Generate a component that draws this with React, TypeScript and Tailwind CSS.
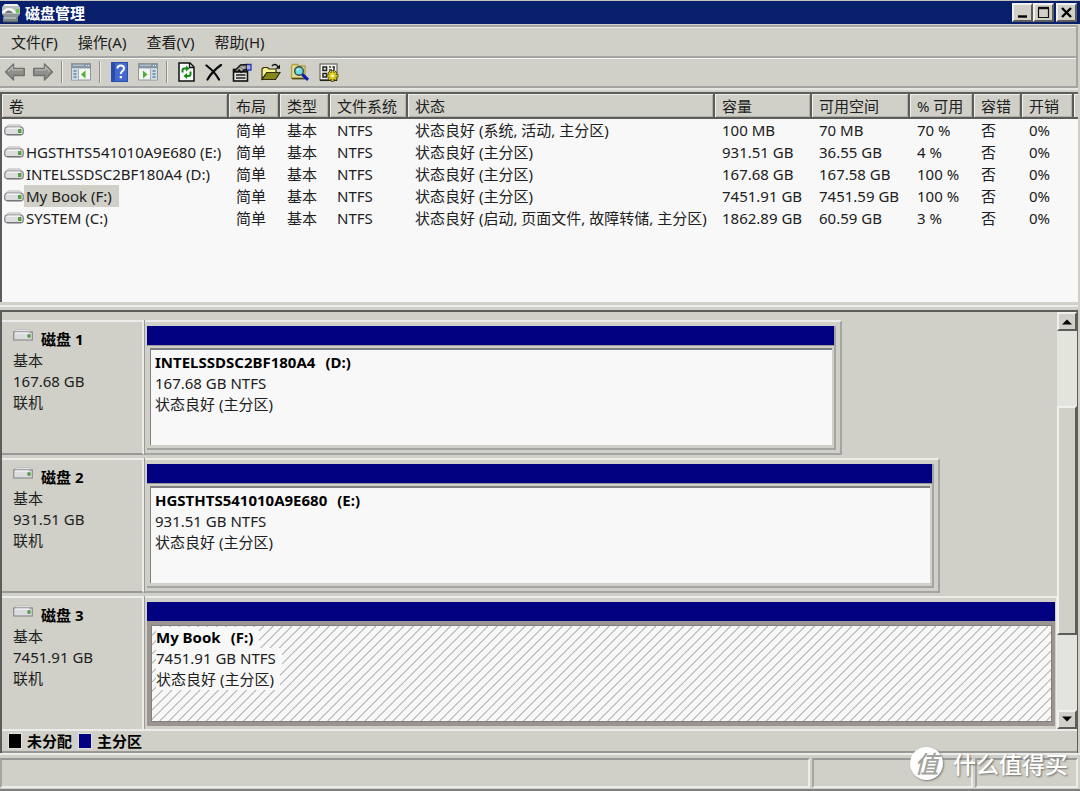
import type { ReactNode } from "react";

const FONT = "font-['Noto_Sans','Noto_Sans_CJK_SC',sans-serif]";
const RAISED = "border-2 border-t-[#f0f0ec] border-l-[#f0f0ec] border-r-[#5c5c5a] border-b-[#5c5c5a]";

type Volume = {
  name: string;
  status: string;
  capacity: string;
  free: string;
  percent: string;
  selected?: boolean;
};

const volumes: Volume[] = [
  { name: "", status: "状态良好 (系统, 活动, 主分区)", capacity: "100 MB", free: "70 MB", percent: "70 %" },
  { name: "HGSTHTS541010A9E680 (E:)", status: "状态良好 (主分区)", capacity: "931.51 GB", free: "36.55 GB", percent: "4 %" },
  { name: "INTELSSDSC2BF180A4 (D:)", status: "状态良好 (主分区)", capacity: "167.68 GB", free: "167.58 GB", percent: "100 %" },
  { name: "My Book (F:)", status: "状态良好 (主分区)", capacity: "7451.91 GB", free: "7451.59 GB", percent: "100 %", selected: true },
  { name: "SYSTEM (C:)", status: "状态良好 (启动, 页面文件, 故障转储, 主分区)", capacity: "1862.89 GB", free: "60.59 GB", percent: "3 %" },
];

const columns = [
  { label: "卷", width: "w-[227px]" },
  { label: "布局", width: "w-[51px]" },
  { label: "类型", width: "w-[50px]" },
  { label: "文件系统", width: "w-[78px]" },
  { label: "状态", width: "w-[307px]" },
  { label: "容量", width: "w-[97px]" },
  { label: "可用空间", width: "w-[98px]" },
  { label: "% 可用", width: "w-[64px]" },
  { label: "容错", width: "w-[48px]" },
  { label: "开销", width: "w-[52px]" },
];

type Disk = { title: string; size: string; volume: string; letter: string; share: number; selected?: boolean };

const disks: Disk[] = [
  { title: "磁盘 1", size: "167.68 GB", volume: "INTELSSDSC2BF180A4", letter: "(D:)", share: 0.764 },
  { title: "磁盘 2", size: "931.51 GB", volume: "HGSTHTS541010A9E680", letter: "(E:)", share: 0.872 },
  { title: "磁盘 3", size: "7451.91 GB", volume: "My Book", letter: "(F:)", share: 1, selected: true },
];

function DriveIcon() {
  return (
    <svg width="20" height="12" viewBox="0 0 20 12" className="shrink-0" aria-hidden="true">
      <path d="M4 .8h12l3 3H1z" fill="#dcdcde" stroke="#bcbcc0" strokeWidth=".7" />
      <rect x=".7" y="3" width="18.6" height="8" rx="3" fill="#dddde0" stroke="#85858a" strokeWidth="1.2" />
      <path d="M3 4.2h13" stroke="#f4f4f6" strokeWidth="1.4" />
      <path d="M3 10.6h14" stroke="#77757c" strokeWidth="1.2" />
      <rect x="14" y="5" width="3.4" height="4" fill="#55a044" />
    </svg>
  );
}

function DiskIcon() {
  return (
    <svg width="20" height="12" viewBox="0 0 20 12" className="shrink-0" aria-hidden="true">
      <path d="M3.500 .6h13L19.300 3H.7z" fill="#e2e2e4" stroke="#b4b4b6" strokeWidth=".7" />
      <rect x=".7" y="3" width="18.600" height="8" fill="#dcdce0" stroke="#8c8c8e" strokeWidth="1.200" />
      <path d="M2 4h14" stroke="#f6f6f8" strokeWidth="1.200" />
      <circle cx="16" cy="7" r="1.900" fill="#55a044" />
    </svg>
  );
}

function AppIcon() {
  return (
    <svg width="20" height="20" viewBox="0 0 20 20" className="shrink-0" aria-hidden="true">
      <path d="M4 1h12l3 3v7H1V4z" fill="#b9bdbd" />
      <path d="M4 1h12l2 2H2z" fill="#eff0ef" />
      <path d="M1 9C3 5.500 6 4.500 9 5s5 2 6 5H1z" fill="#f5f5f5" />
      <path d="M4 10c1.500-3 5-3.500 8 0z" fill="#6d7477" />
      <rect x="15" y="6" width="3" height="4" fill="#6acb3e" />
      <path d="M1 11h18l-2 3H3z" fill="#8d9597" />
      <rect x="2" y="14" width="15" height="5" fill="#7c8689" />
      <path d="M3 15h12" stroke="#d4d9da" />
      <path d="M2 19h15" stroke="#3e474a" />
    </svg>
  );
}

function BackIcon() {
  return (
    <svg width="22" height="20" viewBox="0 0 22 20" aria-hidden="true">
      <path d="M1.500 10 9.500 2v4.500h10.800v7H9.500V18z" fill="#8f8f8c" stroke="#71716f" strokeWidth="1.400" strokeLinejoin="round" />
      <path d="M4 9.500 8.500 5v2.800H19" fill="none" stroke="#b8b8b4" strokeWidth="1.200" />
    </svg>
  );
}

function ForwardIcon() {
  return (
    <svg width="22" height="20" viewBox="0 0 22 20" aria-hidden="true">
      <path d="M20.500 10l-8-8v4.500H1.700v7h10.800V18z" fill="#8f8f8c" stroke="#71716f" strokeWidth="1.400" strokeLinejoin="round" />
      <path d="M18 9.500 13.500 5v2.800H3" fill="none" stroke="#b8b8b4" strokeWidth="1.200" />
    </svg>
  );
}

function TreePaneIcon() {
  return (
    <svg width="20" height="18" viewBox="0 0 20 18" aria-hidden="true">
      <rect x=".5" y=".5" width="19" height="16.500" fill="#f4f4f2" stroke="#8f9699" />
      <rect x="1" y="1" width="18" height="4.500" fill="#8495a4" />
      <path d="M2 2.300h11M1 5.500h18" stroke="#c3ccd4" />
      <path d="M15 2.500h1m1 0h1" stroke="#fff" />
      <rect x="1" y="6" width="6" height="10.500" fill="#cfdce6" />
      <path d="M2.500 8h3m-3 3h3m-3 3h3" stroke="#5c85a8" strokeWidth="1.300" />
      <path d="M7.500 6v11" stroke="#a5adb2" />
      <path d="M14.500 7.500v8L10 11.500z" fill="#4fb035" />
    </svg>
  );
}

function ActionPaneIcon() {
  return (
    <svg width="20" height="18" viewBox="0 0 20 18" aria-hidden="true">
      <rect x=".5" y=".5" width="19" height="16.500" fill="#f4f4f2" stroke="#8f9699" />
      <rect x="1" y="1" width="18" height="4.500" fill="#8495a4" />
      <path d="M2 2.300h11M1 5.500h18" stroke="#c3ccd4" />
      <path d="M15 2.500h1m1 0h1" stroke="#fff" />
      <rect x="13" y="6" width="6" height="10.500" fill="#cfdce6" />
      <path d="M14.500 8h3m-3 3h3m-3 3h3" stroke="#5c85a8" strokeWidth="1.300" />
      <path d="M12.500 6v11" stroke="#a5adb2" />
      <path d="M5 7.500v8l4.500-4z" fill="#4fb035" />
    </svg>
  );
}

function HelpIcon() {
  return (
    <svg width="17" height="20" viewBox="0 0 17 20" aria-hidden="true">
      <rect x=".5" y=".5" width="16" height="19" fill="#4169cf" stroke="#2d4ea8" />
      <path d="M1 1h3v18H1z" fill="#2b4ba6" />
      <path d="M6.500 6.500c0-4 6.500-4 6.500 0 0 2.600-3.200 2.500-3.200 5.500" fill="none" stroke="#fff" strokeWidth="2" />
      <rect x="8.700" y="14" width="2.300" height="2.300" fill="#fff" />
    </svg>
  );
}

function RefreshIcon() {
  return (
    <svg width="17" height="20" viewBox="0 0 17 20" aria-hidden="true">
      <path d="M1 1h11l4 4v14H1z" fill="#fafafa" stroke="#111" strokeWidth="1.500" />
      <path d="M11.500 1v4.500H16" fill="none" stroke="#111" strokeWidth="1.300" />
      <path d="M4.500 10.500V8.500q0-2 2-2h2" fill="none" stroke="#148a14" strokeWidth="2" />
      <path d="M8 3.500l3.500 3L8 9.500z" fill="#148a14" />
      <path d="M12.500 9.500v2.500q0 2-2 2h-2" fill="none" stroke="#148a14" strokeWidth="2" />
      <path d="M9 11l-3.500 3L9 17z" fill="#148a14" />
    </svg>
  );
}

function DeleteIcon() {
  return (
    <svg width="18" height="17" viewBox="0 0 18 17" aria-hidden="true">
      <path d="M1.500 1.500C6 5 11 10 14 15.500M16 1C11 4.500 6 9.500 2.500 15.500" fill="none" stroke="#0c0c0c" strokeWidth="2.200" strokeLinecap="round" />
    </svg>
  );
}

function PropertiesIcon() {
  return (
    <svg width="20" height="19" viewBox="0 0 20 19" aria-hidden="true">
      <rect x="1.500" y="6.500" width="14" height="11.500" fill="#e2e2dc" stroke="#111" strokeWidth="1.600" />
      <path d="M2 8.500h13" stroke="#111" strokeWidth="2.400" />
      <path d="M4 12h9.500M4 15h9.500" stroke="#222" strokeWidth="1.600" />
      <path d="M3 7.500 8.500 2 15 1.500V6l-3.500 1L9 9.500 7.500 7 5 9z" fill="#8d8c86" stroke="#151515" strokeWidth="1.300" />
      <path d="M7.500 5.500l3 1.500M9.500 3.500l3 1.500" stroke="#ddd" strokeWidth=".8" />
      <path d="M15 1.500h4V7h-4" fill="#a9acec" stroke="#2f37a8" strokeWidth="1.300" />
    </svg>
  );
}

function OpenIcon() {
  return (
    <svg width="20" height="18" viewBox="0 0 20 18" aria-hidden="true">
      <path d="M1 16V6l1.500-1.500h4L8 6h7v3.500H6z" fill="#f6f08e" stroke="#2e2e08" strokeWidth="1.200" />
      <path d="M1 16.500 6 9.500h13L14.500 16.500z" fill="#85851a" stroke="#2e2e08" strokeWidth="1.200" />
      <path d="M11 3.200C12.500.8 15.500.8 17 4" fill="none" stroke="#111" strokeWidth="1.300" />
      <path d="M19 1.500v4.200h-4.500z" fill="#111" />
    </svg>
  );
}

function FindIcon() {
  return (
    <svg width="20" height="18" viewBox="0 0 20 18" aria-hidden="true">
      <path d="M1.500 15V3L3 1.500h4.500L9 3h6v12z" fill="#e3dc94" stroke="#aaa142" strokeWidth="1.300" />
      <path d="M2 15.700h13" stroke="#4b4717" strokeWidth="1.400" />
      <circle cx="9" cy="8" r="4.300" fill="#6fdde3" stroke="#37484e" strokeWidth="1.400" />
      <path d="M7 7.500 8.500 6" stroke="#e8ffff" strokeWidth="1.300" />
      <path d="M12.300 11.300l5.700 5.500" stroke="#0c1cb4" strokeWidth="3" />
    </svg>
  );
}

function SettingsIcon() {
  return (
    <svg width="20" height="19" viewBox="0 0 20 19" aria-hidden="true">
      <rect x="1" y="1" width="17" height="16" fill="#f1f1ee" stroke="#6c6c68" strokeWidth="1.200" />
      <path d="M1 17.300h17" stroke="#222" strokeWidth="1.500" />
      <path d="M4 4h3.500v3.500H4zM4 10.500h3.500V14H4z" fill="none" stroke="#222" strokeWidth="1.500" />
      <path d="M10 4h2m1.500 0H16M15 4v4M10 7h3" stroke="#333" strokeWidth="1.500" />
      <path d="M13.500 7v11.800M7.700 12.800h11.800M9.500 8.800l8 8M17.500 8.800l-8 8" stroke="#4f4a08" strokeWidth="3" />
      <path d="M13.500 7.700v10.200M8.400 12.800h10.300M10 9.300l7 7M17 9.300l-7 7" stroke="#d9c91d" strokeWidth="1.800" />
      <circle cx="13.500" cy="12.800" r="3.300" fill="#e0d01f" />
      <circle cx="13.500" cy="12.800" r="1.400" fill="#f5f5e4" />
    </svg>
  );
}

function ToolButton({ label, children }: { label: string; children: ReactNode }) {
  return (
    <button type="button" aria-label={label} className="flex h-7 w-7 items-center justify-center">
      {children}
    </button>
  );
}

function Separator() {
  return (
    <div className="flex w-[10px] justify-center">
      <div className="h-[22px] w-[2px] border-l border-[#8c8c8a] bg-[#ececea]" />
    </div>
  );
}

function CaptionButton({ label, children }: { label: string; children: ReactNode }) {
  return (
    <button type="button" aria-label={label} className={`flex h-[19px] w-[21px] items-center justify-center bg-[#d0d0c8] ${RAISED}`}>
      {children}
    </button>
  );
}

function TitleBar() {
  return (
    <header className="flex h-[24px] items-center border-t border-[#c4c4bc] bg-[#08206b] pr-[3px] pl-px">
      <AppIcon />
      <h1 className="flex-1 pl-[4px] text-[15px] leading-5 font-bold text-white">磁盘管理</h1>
      <CaptionButton label="最小化">
        <svg width="15" height="13" viewBox="0 0 15 13" aria-hidden="true">
          <path d="M3 10.500h9" stroke="#000" strokeWidth="2.400" />
        </svg>
      </CaptionButton>
      <CaptionButton label="最大化">
        <svg width="15" height="13" viewBox="0 0 15 13" aria-hidden="true">
          <path d="M2.500 2v9.500h10V2" fill="none" stroke="#111" strokeWidth="1.200" />
          <path d="M2 2h11" stroke="#111" strokeWidth="2.400" />
        </svg>
      </CaptionButton>
      <div className="pl-[2px]">
        <CaptionButton label="关闭">
          <svg width="15" height="13" viewBox="0 0 15 13" aria-hidden="true">
            <path d="M3 2l9 9M12 2l-9 9" stroke="#000" strokeWidth="2.400" />
          </svg>
        </CaptionButton>
      </div>
    </header>
  );
}

function MenuBar() {
  return (
    <nav className="mr-[2px] flex h-[33px] items-center gap-[2px] border-t-2 border-r-2 border-b-2 border-[#a4a4a2] pl-[2px] shadow-[inset_0_1px_0_#ececea]">
      {["文件(F)", "操作(A)", "查看(V)", "帮助(H)"].map((item) => (
        <button type="button" key={item} className="px-[9px] text-[15px] leading-6 text-[#202020]">
          {item}
        </button>
      ))}
    </nav>
  );
}

function ToolBar() {
  return (
    <div role="toolbar" aria-label="工具栏" className="mr-[2px] flex h-[30px] items-center border-r-2 border-b-2 border-[#a4a4a2] pl-px shadow-[inset_0_1px_0_#f4f4f2,0_2px_0_#e6e6e0]">
      <ToolButton label="后退"><BackIcon /></ToolButton>
      <ToolButton label="前进"><ForwardIcon /></ToolButton>
      <Separator />
      <ToolButton label="控制台树"><TreePaneIcon /></ToolButton>
      <Separator />
      <div className="flex gap-px">
        <ToolButton label="帮助"><HelpIcon /></ToolButton>
        <ToolButton label="操作窗格"><ActionPaneIcon /></ToolButton>
      </div>
      <Separator />
      <ToolButton label="刷新"><RefreshIcon /></ToolButton>
      <ToolButton label="删除"><DeleteIcon /></ToolButton>
      <div className="flex gap-px">
        <ToolButton label="属性"><PropertiesIcon /></ToolButton>
        <ToolButton label="打开"><OpenIcon /></ToolButton>
        <ToolButton label="查找"><FindIcon /></ToolButton>
        <ToolButton label="设置"><SettingsIcon /></ToolButton>
      </div>
    </div>
  );
}

function VolumeTable() {
  return (
    <section className="mt-[4px] mr-[2px] min-h-[210px] border-t-2 border-l-2 border-[#5c5c5a] bg-[#f8f8f8]">
      <table className="w-full table-fixed border-separate border-spacing-0 text-left text-[15px] text-[#202020]">
        <colgroup>
          {columns.map((column) => (
            <col key={column.label} className={column.width} />
          ))}
          <col />
        </colgroup>
        <thead>
          <tr className="h-[25px] bg-[#d0d0c8]">
            {columns.map((column) => (
              <th
                key={column.label}
                scope="col"
                className="border-r-2 border-b-2 border-[#5c5c5a] py-0 pr-0 pl-[7px] leading-[22px] font-normal whitespace-nowrap shadow-[inset_1px_1px_0_#f0f0ec,inset_-1px_-1px_0_#b0b0aa]"
              >
                {column.label}
              </th>
            ))}
            <td className="border-b-2 border-[#5c5c5a] p-0 shadow-[inset_1px_1px_0_#f0f0ec]" />
          </tr>
        </thead>
        <tbody>
          {volumes.map((volume) => (
            <tr key={volume.capacity} className="h-[22px] leading-[22px] whitespace-nowrap">
              <td className="p-0">
                <div className="flex h-[22px] items-center pl-[2px]">
                  <DriveIcon />
                  <span className={volume.selected ? "bg-[#d0d0c8] pr-[7px] pl-[2px]" : "pl-[2px]"}>{volume.name}</span>
                </div>
              </td>
              <td className="py-0 pr-0 pl-[7px]">简单</td>
              <td className="py-0 pr-0 pl-[7px]">基本</td>
              <td className="py-0 pr-0 pl-[7px]">NTFS</td>
              <td className="py-0 pr-0 pl-[7px]">{volume.status}</td>
              <td className="py-0 pr-0 pl-[7px]">{volume.capacity}</td>
              <td className="py-0 pr-0 pl-[7px]">{volume.free}</td>
              <td className="py-0 pr-0 pl-[7px]">{volume.percent}</td>
              <td className="py-0 pr-0 pl-[7px]">否</td>
              <td className="py-0 pr-0 pl-[7px]">0%</td>
              <td className="p-0" />
            </tr>
          ))}
        </tbody>
      </table>
    </section>
  );
}

function Hatch() {
  return (
    <svg className="absolute inset-0 h-full w-full" aria-hidden="true">
      <defs>
        <pattern id="hatch" width="28" height="28" patternUnits="userSpaceOnUse">
          <path
            d="M-1 10.330 10.330-1M-1 19.670 19.670-1M-1 29 29-1M8.330 29 29 8.330M17.670 29 29 17.670"
            stroke="#b2b2b2"
            strokeWidth="1.100"
          />
        </pattern>
      </defs>
      <rect width="100%" height="100%" fill="url(#hatch)" />
    </svg>
  );
}

function DiskRow({ disk }: { disk: Disk }) {
  const textBack = disk.selected ? "bg-[#f8f8f8] pr-[6px]" : "";
  return (
    <div className="flex h-[138px] shrink-0 pb-[3px]">
      <div className="w-[142px] shrink-0 border-t-2 border-r-2 border-b-2 border-t-[#ececea] border-r-[#ececea] border-b-[#989896] pt-[7px] pl-[11px] text-[15px] leading-[21px] text-[#202020] shadow-[1px_0_0_#989896]">
        <div className="flex gap-[8px]">
          <DiskIcon />
          <h2 className="text-[15px] font-bold text-black">{disk.title}</h2>
        </div>
        <p>基本</p>
        <p>{disk.size}</p>
        <p>联机</p>
      </div>
      <div className="min-w-0 flex-1 pl-px">
        <div
          className={`flex h-full flex-col border-t-2 border-b-2 border-t-[#ececea] pt-[4px] pb-[3px] pl-[2px] ${disk.selected ? "border-r border-r-[#ececea] border-b-[#ececea] pr-px" : "border-r-2 border-r-[#a4a4a2] border-b-[#a4a4a2] pr-[4px]"}`}
          style={{ width: `${disk.share * 100}%` }}
        >
          <div className={`flex flex-1 flex-col ${disk.selected ? "" : "border-r-2 border-b-2 border-[#a4a4a2]"}`}>
            <div className="h-[19px] bg-[#000080]" />
            <div className={disk.selected ? "flex flex-1 bg-[#9c9490] pt-[4px] pr-[3px] pb-[4px] pl-[4px]" : "flex flex-1 border-t border-[#989896] pt-[2px] pr-[2px] pb-[3px] pl-[3px]"}>
              <div className={`relative flex-1 bg-[#f8f8f8] pl-[4px] text-[15px] leading-[21px] text-[#202020] ${disk.selected ? "border border-[#808080] pt-px" : "border-t-2 border-l border-[#808080] pt-[2px]"}`}>
                {disk.selected && <Hatch />}
                <div className="relative flex flex-col items-start">
                  <h3 className={`flex gap-[10px] font-bold text-black ${textBack}`}>
                    <span>{disk.volume}</span>
                    <span>{disk.letter}</span>
                  </h3>
                  <p className={textBack}>{disk.size} NTFS</p>
                  <p className={textBack}>状态良好 (主分区)</p>
                </div>
              </div>
            </div>
          </div>
        </div>
      </div>
    </div>
  );
}

function ScrollBar() {
  return (
    <div className="flex w-[20px] shrink-0 flex-col bg-[#e4e4df]">
      <button type="button" aria-label="向上滚动" className={`flex h-[19px] items-center justify-center bg-[#d0d0c8] ${RAISED}`}>
        <svg width="10" height="6" viewBox="0 0 10 6" aria-hidden="true"><path d="M0 5.500 5 .5l5 5z" fill="#000" /></svg>
      </button>
      <div className="flex-[76]" />
      <div className={`flex-[226] bg-[#d0d0c8] ${RAISED}`} />
      <div className="flex-[76]" />
      <button type="button" aria-label="向下滚动" className={`flex h-[19px] items-center justify-center bg-[#d0d0c8] ${RAISED}`}>
        <svg width="10" height="6" viewBox="0 0 10 6" aria-hidden="true"><path d="M0 .5 5 5.500l5-5z" fill="#000" /></svg>
      </button>
    </div>
  );
}

function Legend() {
  return (
    <div className="flex h-[24px] items-center border-t-2 border-b-2 border-t-[#ececea] border-b-[#989896] pl-[6px] text-[15px] leading-5 font-bold text-black">
      <span className="mr-[5px] h-[16px] w-[14px] border border-[#e0e0dc] bg-black" />
      <span>未分配</span>
      <span className="mr-[5px] ml-[6px] h-[16px] w-[14px] border border-[#e0e0dc] bg-[#000080]" />
      <span>主分区</span>
    </div>
  );
}

function StatusBar() {
  const cell = "border-t-2 border-l-2 border-r-2 border-b-2 border-t-[#989896] border-l-[#a4a4a2] border-r-[#ececea] border-b-[#ececea]";
  return (
    <footer className="relative flex h-[38px] gap-[2px] border-t-2 border-b-2 border-t-[#ececea] border-b-[#808080] pt-[3px] pr-[2px] pb-px">
      <div className={`flex-1 ${cell}`} />
      <div className={`w-[161px] ${cell}`} />
      <div className={`w-[103px] ${cell}`} />
      <div className="absolute right-[12px] bottom-[9px] flex items-center gap-[10px] text-white">
        <span className="flex h-[33px] w-[33px] items-center justify-center rounded-full bg-white text-[24px] leading-8 font-medium text-[#a3a39d] shadow-[1px_1px_2px_#80807c]">
          <i>值</i>
        </span>
        <span className="text-[23px] leading-8 font-medium [text-shadow:1px_1px_2px_#6e6e6a]">什么值得买</span>
      </div>
    </footer>
  );
}

export default function App() {
  return (
    <div className={`flex h-screen min-h-[600px] flex-col overflow-hidden bg-[#d0d0c8] ${FONT}`}>
      <TitleBar />
      <div className="h-px shrink-0 bg-[#d0d0c8]" />
      <MenuBar />
      <ToolBar />
      <VolumeTable />
      <div className="mr-[2px] flex h-[8px] shrink-0 flex-col justify-center">
        <div className="h-[2px] bg-[#ececea]" />
      </div>
      <main className="mr-[2px] flex min-h-0 flex-1 flex-col border-l-2 border-r border-[#5c5c5a]">
        <div className="flex min-h-0 flex-1 border-t-2 border-[#5c5c5a]">
          <div className="flex min-w-0 flex-1 flex-col overflow-hidden pt-[8px]">
            {disks.map((disk) => (
              <DiskRow key={disk.title} disk={disk} />
            ))}
          </div>
          <ScrollBar />
        </div>
        <Legend />
      </main>
      <StatusBar />
    </div>
  );
}
